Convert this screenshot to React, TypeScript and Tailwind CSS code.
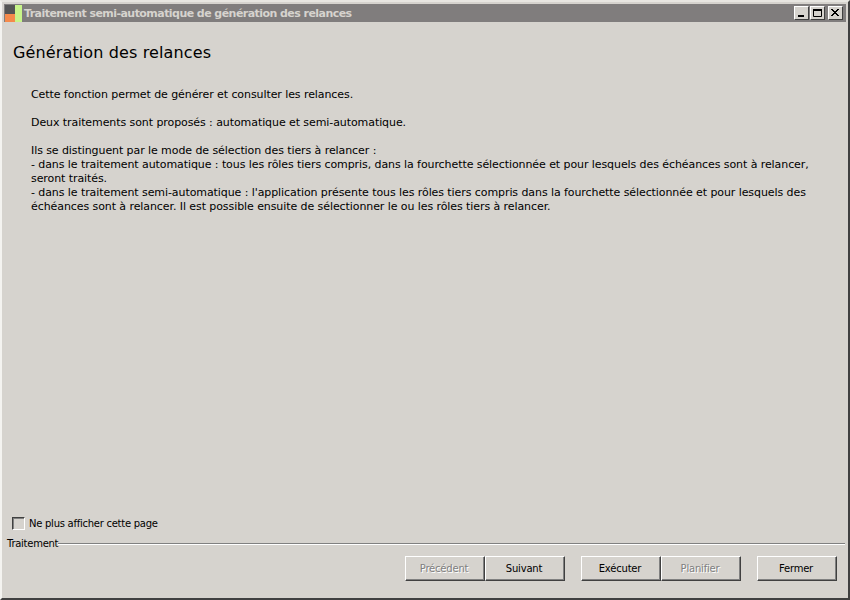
import React from "react";

const font = "font-['DejaVu_Sans',sans-serif]";

const WinButton: React.FC<{ label: string; disabled?: boolean }> = ({ label, disabled }) => (
  <div className="h-[25px] w-[80px] pr-[2px] bg-[#d6d3ce] border border-t-white border-l-white border-r-[#404040] border-b-[#404040] shadow-[inset_-1px_-1px_0_#808080] flex items-center justify-center text-[10px] tracking-[-0.2px]">
    <span className={disabled ? "text-[#808080] [text-shadow:1px_1px_0_#ffffff]" : "text-black"}>{label}</span>
  </div>
);

const CaptionButton: React.FC<{ children: React.ReactNode }> = ({ children }) => (
  <div className="h-[14px] w-[15px] bg-[#d6d3ce] border border-t-white border-l-white border-r-[#404040] border-b-[#404040] flex items-center justify-center">
    <svg width="11" height="10" viewBox="0 0 11 10" className="block">{children}</svg>
  </div>
);

const App: React.FC = () => {
  return (
    <div className={`${font} h-[600px] w-[850px] bg-[#d6d3ce] text-[11px] leading-[14px] text-black flex flex-col border-2 border-t-[#e8e6e1] border-l-[#f4f3f0] border-r-[#404040] border-b-[#404040] pt-[2px] pl-[2px] pr-[2px] pb-[1px]`}>
      <div className="h-[18px] bg-[#807d7d] flex items-center shrink-0">
        <svg width="18" height="18" viewBox="0 0 18 18" className="block shrink-0">
          <rect x="1" y="1" width="10" height="9" fill="#555555" />
          <rect x="1" y="10" width="10" height="8" fill="#f58a4b" />
          <rect x="11" y="1" width="7" height="17" fill="#c8f58a" />
        </svg>
        <span className="ml-[2px] mt-[2px] font-bold text-[#d6d3ce] tracking-[-0.55px]">Traitement semi-automatique de génération des relances</span>
        <div className="ml-auto mr-[3px] flex">
          <CaptionButton><rect x="2" y="7" width="6" height="2" fill="#000" /></CaptionButton>
          <div className="ml-[1px]">
            <CaptionButton>
              <path d="M1.5 1.5h8v7h-8z" fill="none" stroke="#000" /><rect x="1" y="1" width="9" height="2" fill="#000" />
            </CaptionButton>
          </div>
          <div className="ml-[3px]">
            <CaptionButton><path d="M1 1l7 7M2 1l7 7M8 1l-7 7M9 1l-7 7" stroke="#000" fill="none" /></CaptionButton>
          </div>
        </div>
      </div>

      <h1 className="mt-[19px] ml-[9px] text-[16px] leading-[24px] font-normal tracking-[0.13px]">Génération des relances</h1>

      <div className="mt-[23px] ml-[27px] mr-[30px] flex-1 tracking-[-0.08px]">
        <p>Cette fonction permet de générer et consulter les relances.</p>
        <p className="mt-[14px]">Deux traitements sont proposés : automatique et semi-automatique.</p>
        <p className="mt-[14px]">Ils se distinguent par le mode de sélection des tiers à relancer :</p>
        <p>- dans le traitement automatique : tous les rôles tiers compris, dans la fourchette sélectionnée et pour lesquels des échéances sont à relancer, seront traités.</p>
        <p>- dans le traitement semi-automatique : l'application présente tous les rôles tiers compris dans la fourchette sélectionnée et pour lesquels des échéances sont à relancer. Il est possible ensuite de sélectionner le ou les rôles tiers à relancer.</p>
      </div>

      <div className="ml-[8px] flex items-center gap-[4px] text-[10px] tracking-[-0.26px]">
        <div className="h-[13px] w-[13px] -mt-[1px] bg-[#d6d3ce] border border-t-[#404040] border-l-[#404040] border-r-white border-b-white shadow-[inset_1px_1px_0_#808080]" />
        <span>Ne plus afficher cette page</span>
      </div>

      <div className="mt-[6px] ml-[3px] mr-[1px] flex items-center text-[10px] tracking-[-0.26px]">
        <span>Traitement</span>
        <div className="flex-1 h-[2px] border-t border-t-[#808080] border-b border-b-white" />
      </div>

      <div className="mt-[5px] mb-[16px] mr-[9px] flex justify-end">
        <WinButton label="Précédent" disabled />
        <WinButton label="Suivant" />
        <div className="w-[16px]" />
        <WinButton label="Exécuter" />
        <WinButton label="Planifier" disabled />
        <div className="w-[16px]" />
        <WinButton label="Fermer" />
      </div>
    </div>
  );
};

export default App;
